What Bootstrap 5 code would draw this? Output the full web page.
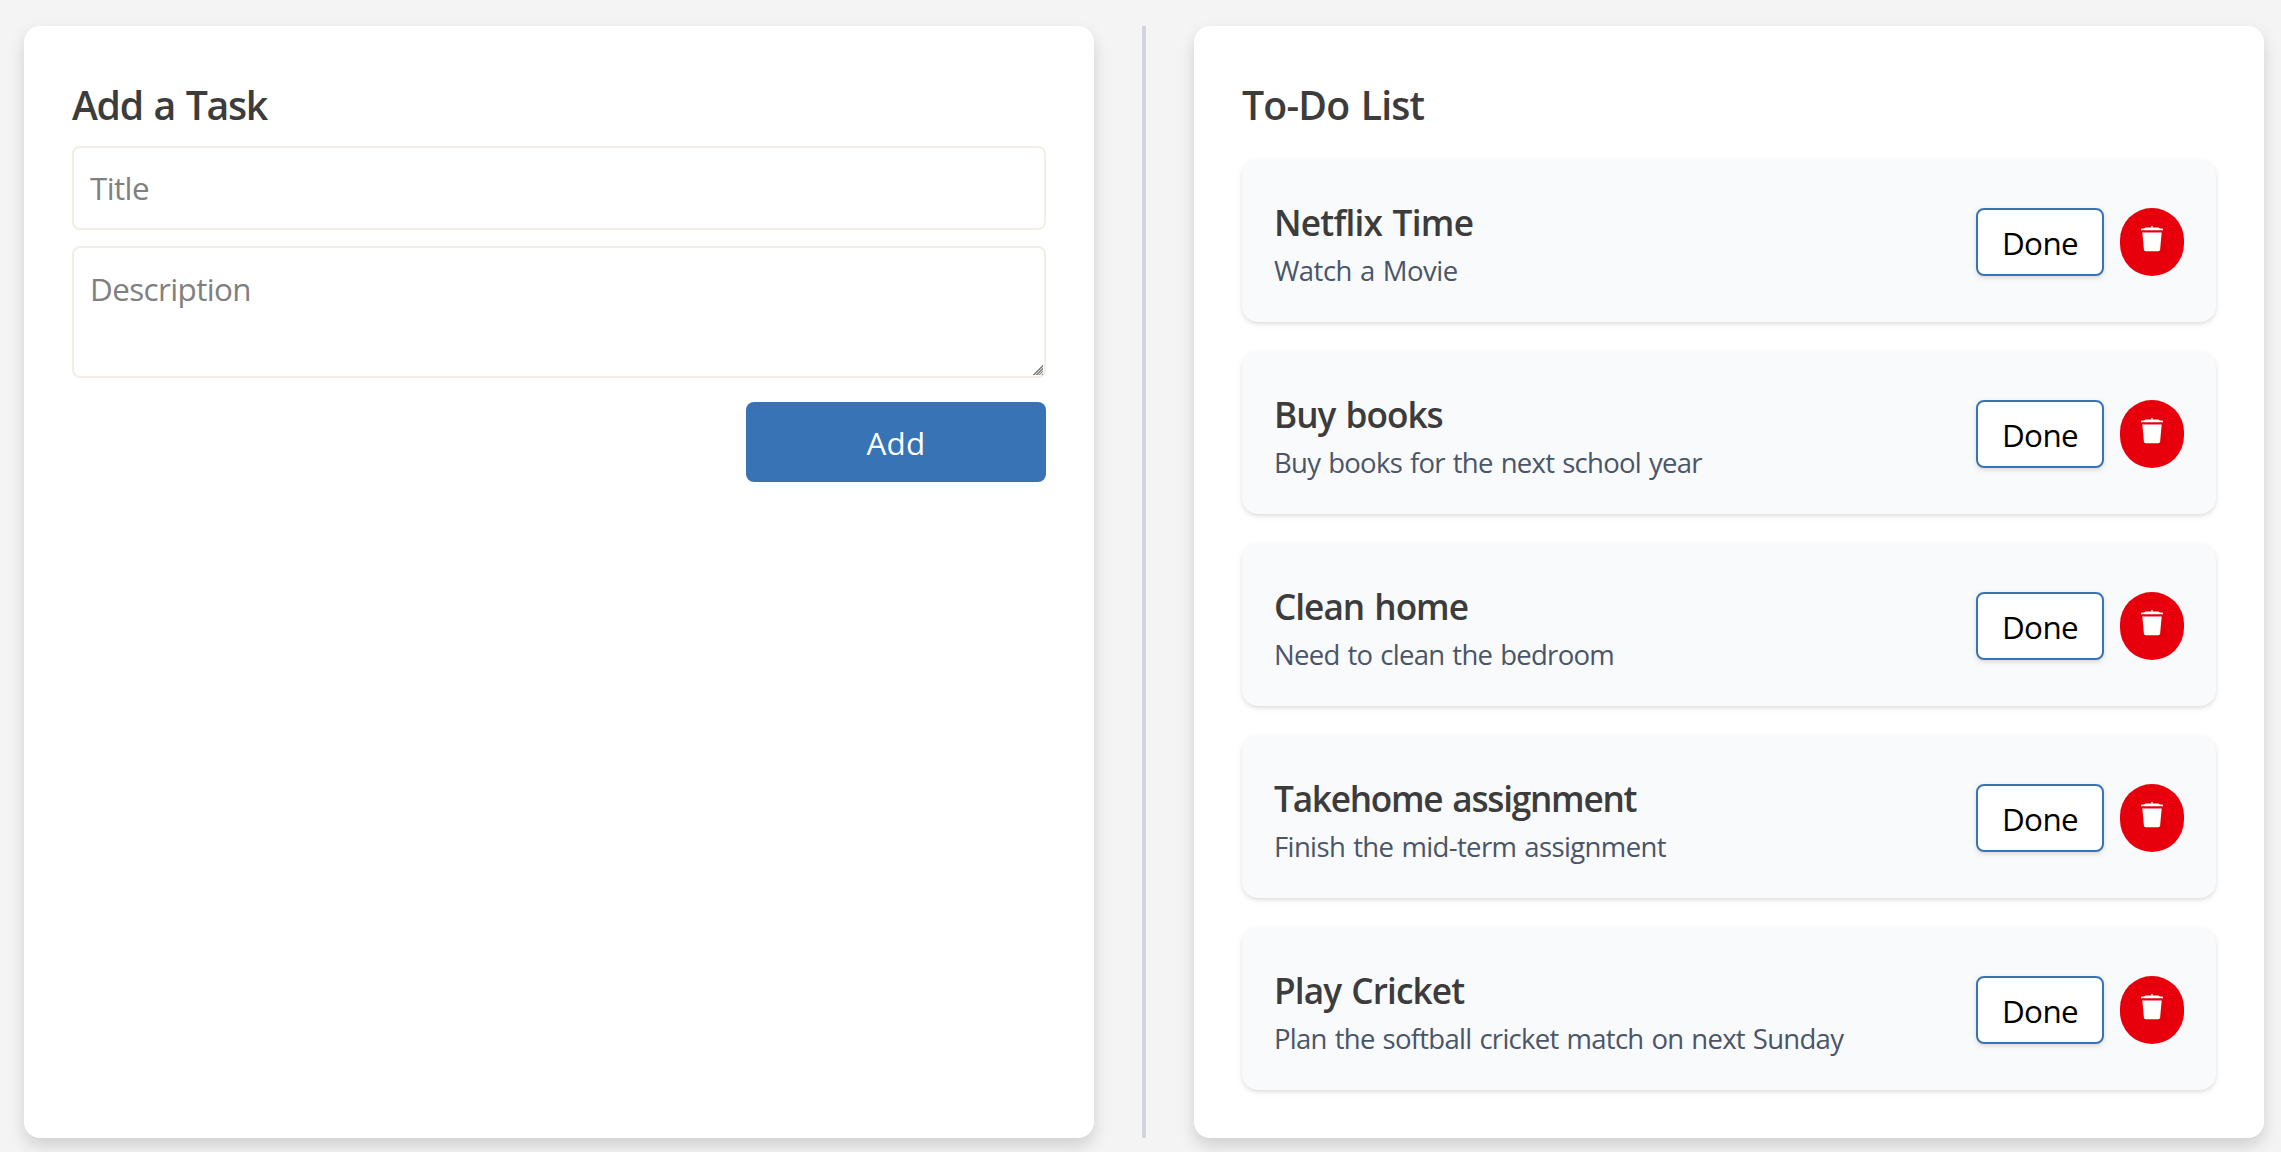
<!DOCTYPE html>
<html lang="en">
<head>
<meta charset="utf-8">
<title>To-Do List</title>
<link href="https://cdn.jsdelivr.net/npm/bootstrap@5.3.0/dist/css/bootstrap.min.css" rel="stylesheet">
<style>
  body { background: #f4f4f4; font-family: "Open Sans", "Noto Sans", sans-serif; color: #3c3c3c; }
  .board { height: 1152px; padding: 26px 17px 14px 24px; gap: 48px; }
  .panel { flex: 1 1 0; min-width: 0; border-radius: 16px; padding: 48px; box-shadow: 0 8px 16px rgba(0,0,0,.15); }
  .divider { width: 4px; background: #d1d5db; }
  .panel-title { font-size: 39.2px; font-weight: 600; line-height: 60px; margin: 0; padding-top: 1px; word-spacing: 2px; }
  .title-add { letter-spacing: -1.33px; margin-bottom: 11px; }
  .title-list { letter-spacing: -.8px; margin-bottom: 25px; }
  .task-form { gap: 16px; }
  .field.form-control { border: 2px solid #f2eee5; border-radius: 8px; padding: 17px 16px 15px; font-size: 31.4px; line-height: 48px; }
  .field.form-control::placeholder { color: #808080; opacity: 1; }
  .field-title.form-control { height: 84px; padding: 15px 16px 17px; letter-spacing: -.6px; }
  .field-text { height: 132px; letter-spacing: -.6px; }
  .field-text::-webkit-resizer { background: linear-gradient(135deg, transparent 7px, #888 7px 8px, #ddd 8px 9px, #888 9px 10px, #ddd 10px 11px, #888 11px 12px, #ddd 12px 13px, #888 13px) 4px 4px / 10px 10px no-repeat; }
  .btn-add.btn { width: 300px; height: 80px; margin-top: 8px; padding: 2px 0 0; border: 0; border-radius: 8px; background: #3773b5; color: #fff; font-size: 31.4px; letter-spacing: .3px; }
  .tasks { gap: 30px; }
  .task { height: 162px; padding: 0 32px; border-radius: 16px; background: #f9fafc; box-shadow: 0 2px 6px rgba(0,0,0,.1), 0 2px 4px -2px rgba(0,0,0,.1); }
  .task-copy { padding-bottom: 2px; }
  .task h3 { font-size: 35.2px; font-weight: 600; line-height: 60px; margin: 0; letter-spacing: -1px; word-spacing: 2px; }
  .task p { font-size: 27.5px; line-height: 37px; margin: 0; color: #4a5568; letter-spacing: -.72px; word-spacing: 1.5px; }
  .task:nth-child(1) h3 { letter-spacing: -.75px; }
  .task:nth-child(1) p { letter-spacing: -.53px; }
  .task:nth-child(4) h3 { letter-spacing: -1.25px; }
  .task:nth-child(4) p { letter-spacing: -.63px; }
  .task:nth-child(5) h3 { letter-spacing: -.9px; }
  .actions { gap: 16px; padding-top: 2px; }
  .btn-done.btn { width: 128px; height: 68px; padding: 2px 0 0; border: 2px solid #3773b5; border-radius: 8px; background: #fff; color: #000; font-size: 31.4px; letter-spacing: -.6px; box-shadow: 0 2px 6px rgba(0,0,0,.1), 0 2px 4px -2px rgba(0,0,0,.1); }
  .btn-trash.btn { width: 64px; height: 68px; padding: 0 0 6px; border: 0; border-radius: 34px; background: #e7000b; color: #fff; }
</style>
</head>
<body>
<div class="board d-flex">
  <section class="panel bg-white">
    <h2 class="panel-title title-add">Add a Task</h2>
    <form class="task-form d-flex flex-column">
      <input class="field field-title form-control" type="text" placeholder="Title">
      <textarea class="field field-text form-control" placeholder="Description"></textarea>
      <button class="btn btn-add align-self-end" type="button">Add</button>
    </form>
  </section>
  <div class="divider"></div>
  <section class="panel bg-white">
    <h2 class="panel-title title-list">To-Do List</h2>
    <div class="tasks d-flex flex-column" id="tasks"></div>
  </section>
</div>
<script src="https://cdn.jsdelivr.net/npm/bootstrap@5.3.0/dist/js/bootstrap.bundle.min.js"></script>
<script>
  const tasks = [
    ["Netflix Time", "Watch a Movie"],
    ["Buy books", "Buy books for the next school year"],
    ["Clean home", "Need to clean the bedroom"],
    ["Takehome assignment", "Finish the mid-term assignment"],
    ["Play Cricket", "Plan the softball cricket match on next Sunday"]
  ];
  document.getElementById("tasks").innerHTML = tasks.map(([title, text]) => `
    <article class="task d-flex align-items-center justify-content-between">
      <div class="task-copy"><h3>${title}</h3><p>${text}</p></div>
      <div class="actions d-flex">
        <button class="btn btn-done" type="button">Done</button>
        <button class="btn btn-trash d-flex align-items-center justify-content-center" type="button" aria-label="Delete">
          <svg width="24" height="28" viewBox="0 0 24 28" fill="currentColor">
            <path d="M11.3 1h1.4v1.4h4.6q2 0 2.6 1h2.1q1 0 1 .9v.9H1v-.9q0-.9 1-.9h2.1q.6-1 2.6-1h4.6z"/>
            <path d="M2.3 7.4h19.4l-1.6 17q-.2 1.8-1.8 1.8H5.7q-1.6 0-1.8-1.8z"/>
          </svg>
        </button>
      </div>
    </article>`).join("");
</script>
</body>
</html>
